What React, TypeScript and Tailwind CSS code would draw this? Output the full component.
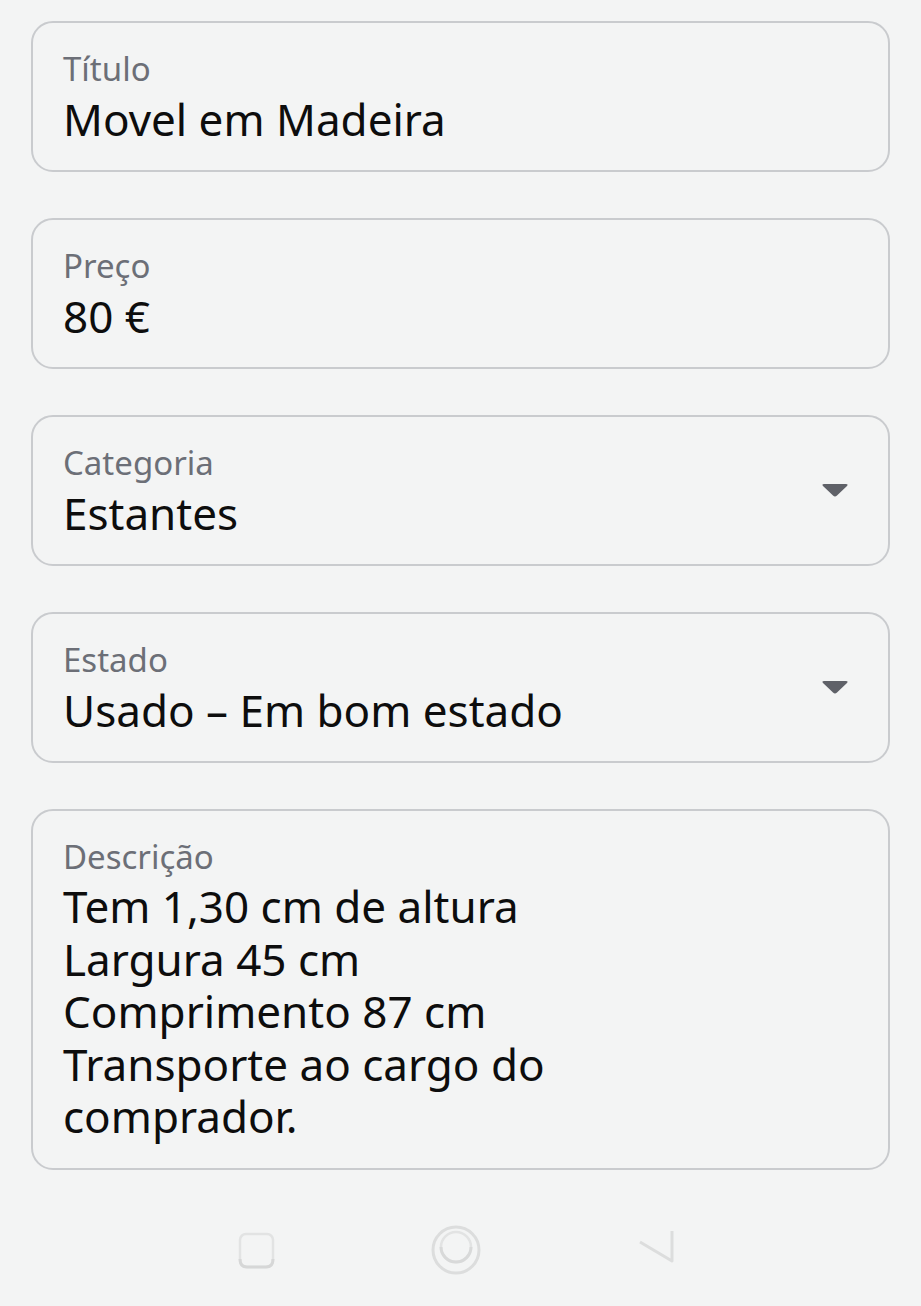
import React from "react";

const Caret = () => (
  <svg width="30" height="18" viewBox="0 0 30 18" className="shrink-0">
    <path d="M4 3 H26 Q28.5 3 27 5 L17 14.5 Q15 16.5 13 14.5 L3 5 Q1.5 3 4 3 Z" fill="#5f6168" />
  </svg>
);

function Field({ label, value, select }: { label: string; value: React.ReactNode; select?: boolean }) {
  return (
    <div className="flex items-center rounded-[22px] border-2 border-[#c9cbce] pl-[30px] pr-[38px] pt-[24px] pb-[25px]">
      <div className="flex flex-1 flex-col gap-[2px]">
        <div className="text-[33px] leading-[44px] text-[#6c6f77]">{label}</div>
        <div className="text-[44px] leading-[52px] text-[#0d0d0d]">{value}</div>
      </div>
      {select && <Caret />}
    </div>
  );
}

export default function App() {
  return (
    <div
      className="flex min-h-[1306px] w-[921px] flex-col bg-[#f3f4f4]"
      style={{ fontFamily: '"Noto Sans", "Open Sans", sans-serif' }}
    >
      <div className="flex flex-col gap-[46px] pl-[31px] pr-[31px] pt-[21px]">
        <Field label="Título" value="Movel em Madeira" />
        <Field label="Preço" value="80 €" />
        <Field label="Categoria" value="Estantes" select />
        <Field label="Estado" value="Usado – Em bom estado" select />
        <div className="rounded-[22px] border-2 border-[#c9cbce] pl-[30px] pr-[38px] pt-[24px] pb-[25px]">
          <div className="text-[33px] leading-[44px] text-[#6c6f77]">Descrição</div>
          <div className="mt-[1px] text-[44px] leading-[52.5px] text-[#0d0d0d]">
            <div>Tem 1,30 cm de altura</div>
            <div>Largura 45 cm</div>
            <div>Comprimento 87 cm</div>
            <div>Transporte ao cargo do</div>
            <div>comprador.</div>
          </div>
        </div>
      </div>
      <div className="mt-[55px] flex items-center justify-center gap-[150px] pr-[9px]">
        <svg width="50" height="50" viewBox="0 0 50 50">
          <rect x="9" y="9" width="33" height="33" rx="6" fill="none" stroke="#e2e3e3" strokeWidth="2.5" />
          <path d="M9 34 Q9 42 16 42 H35 Q42 42 42 34" fill="none" stroke="#d6d7d7" strokeWidth="3" />
        </svg>
        <svg width="50" height="50" viewBox="0 0 50 50">
          <circle cx="25" cy="25" r="23" fill="none" stroke="#dcdddd" strokeWidth="3" />
          <circle cx="25" cy="22" r="15" fill="none" stroke="#e2e3e3" strokeWidth="2.5" />
          <path d="M10 22 A15 15 0 0 0 40 22" fill="none" stroke="#d8d9d9" strokeWidth="3" />
        </svg>
        <svg width="50" height="50" viewBox="0 0 50 50">
          <path d="M9 17 L41 36 V6" fill="none" stroke="#dcdddd" strokeWidth="3" strokeLinejoin="round" />
        </svg>
      </div>
    </div>
  );
}
